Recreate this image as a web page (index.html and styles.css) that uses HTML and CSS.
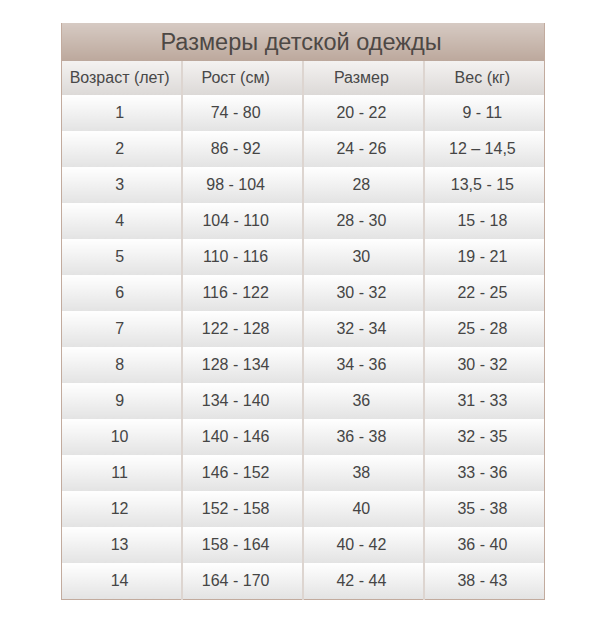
FILE: index.html
```html
<!DOCTYPE html>
<html>
<head>
<meta charset="utf-8">
<link rel="stylesheet" href="styles.css">
</head>
<body>
<div class="wrap">
<table class="sizes">
<thead>
<tr><th class="title" colspan="4">Размеры детской одежды</th></tr>
<tr class="head"><th>Возраст (лет)</th><th class="c2">Рост (см)</th><th>Размер</th><th>Вес (кг)</th></tr>
</thead>
<tbody>
<tr><td>1</td><td class="c2">74 - 80</td><td>20 - 22</td><td>9 - 11</td></tr>
<tr><td>2</td><td class="c2">86 - 92</td><td>24 - 26</td><td>12 – 14,5</td></tr>
<tr><td>3</td><td class="c2">98 - 104</td><td>28</td><td>13,5 - 15</td></tr>
<tr><td>4</td><td class="c2">104 - 110</td><td>28 - 30</td><td>15 - 18</td></tr>
<tr><td>5</td><td class="c2">110 - 116</td><td>30</td><td>19 - 21</td></tr>
<tr><td>6</td><td class="c2">116 - 122</td><td>30 - 32</td><td>22 - 25</td></tr>
<tr><td>7</td><td class="c2">122 - 128</td><td>32 - 34</td><td>25 - 28</td></tr>
<tr><td>8</td><td class="c2">128 - 134</td><td>34 - 36</td><td>30 - 32</td></tr>
<tr><td>9</td><td class="c2">134 - 140</td><td>36</td><td>31 - 33</td></tr>
<tr><td>10</td><td class="c2">140 - 146</td><td>36 - 38</td><td>32 - 35</td></tr>
<tr><td>11</td><td class="c2">146 - 152</td><td>38</td><td>33 - 36</td></tr>
<tr><td>12</td><td class="c2">152 - 158</td><td>40</td><td>35 - 38</td></tr>
<tr><td>13</td><td class="c2">158 - 164</td><td>40 - 42</td><td>36 - 40</td></tr>
<tr><td>14</td><td class="c2">164 - 170</td><td>42 - 44</td><td>38 - 43</td></tr>
</tbody>
</table>
</div>
</body>
</html>
```
FILE: styles.css
```css
html, body {
  margin: 0;
  padding: 0;
  background: #ffffff;
}
.wrap {
  padding: 23px 0 0 61px;
}
.sizes {
  border-collapse: collapse;
  border: 1px solid #c2ab9e;
  border-top: none;
  width: 484px;
  table-layout: fixed;
  font-family: "Liberation Sans", Arial, sans-serif;
  color: #454545;
}
.sizes th, .sizes td {
  padding: 0 4px 0 0;
  text-align: center;
  font-weight: normal;
}
.title {
  height: 38px;
  font-size: 23.5px;
  line-height: 34px;
  color: #4d4845;
  background: linear-gradient(#d6cac3, #bca89c);
}
.head th {
  height: 34px;
  font-size: 16px;
  line-height: 28px;
  color: #484848;
  background: linear-gradient(#f4f2f1, #dcd9d7);
}
.sizes td {
  height: 36px;
  font-size: 16px;
  line-height: 34px;
  background: linear-gradient(#ffffff, #e3e3e3);
}
.head th + th, .sizes td + td {
  border-left: 2px solid #ddd5d0;
}
.head th:first-child, .sizes td:first-child { width: 120px; }
.head th:nth-child(2), .sizes td:nth-child(2) { width: 120px; }
.head th:nth-child(3), .sizes td:nth-child(3) { width: 118px; }
.sizes .c2 { padding-right: 14px; }
```
